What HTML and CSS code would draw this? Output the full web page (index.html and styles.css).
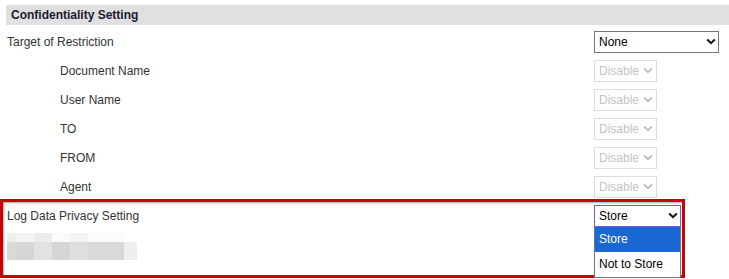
FILE: index.html
```html
<!DOCTYPE html>
<html lang="en">
<head>
    <meta charset="UTF-8">
    <title>Confidentiality Setting</title>
    <link rel="stylesheet" href="styles.css">
</head>
<body>

    <!-- Confidentiality section -->
    <div class="section">
        <div class="section-title">Confidentiality Setting</div>

        <div class="row">
            <div class="label">Target of Restriction</div>
            <div class="select-box wide">
                <select class="sel"><option>None</option></select>
                <svg class="chev" viewBox="0 0 10 7"><path d="M1.2 1.5L5 5.2 8.8 1.5"/></svg>
            </div>
        </div>

        <div class="row">
            <div class="label sub">Document Name</div>
            <div class="select-box small disabled">
                <select class="sel" disabled><option>Disable</option></select>
                <svg class="chev" viewBox="0 0 10 7"><path d="M1.2 1.5L5 5.2 8.8 1.5"/></svg>
            </div>
        </div>
        <div class="row">
            <div class="label sub">User Name</div>
            <div class="select-box small disabled">
                <select class="sel" disabled><option>Disable</option></select>
                <svg class="chev" viewBox="0 0 10 7"><path d="M1.2 1.5L5 5.2 8.8 1.5"/></svg>
            </div>
        </div>
        <div class="row">
            <div class="label sub">TO</div>
            <div class="select-box small disabled">
                <select class="sel" disabled><option>Disable</option></select>
                <svg class="chev" viewBox="0 0 10 7"><path d="M1.2 1.5L5 5.2 8.8 1.5"/></svg>
            </div>
        </div>
        <div class="row">
            <div class="label sub">FROM</div>
            <div class="select-box small disabled">
                <select class="sel" disabled><option>Disable</option></select>
                <svg class="chev" viewBox="0 0 10 7"><path d="M1.2 1.5L5 5.2 8.8 1.5"/></svg>
            </div>
        </div>
        <div class="row">
            <div class="label sub">Agent</div>
            <div class="select-box small disabled">
                <select class="sel" disabled><option>Disable</option></select>
                <svg class="chev" viewBox="0 0 10 7"><path d="M1.2 1.5L5 5.2 8.8 1.5"/></svg>
            </div>
        </div>

        <div class="row">
            <div class="label">Log Data Privacy Setting</div>
            <div class="select-box mid focused">
                <select class="sel">
                    <option>Store</option>
                    <option>Not to Store</option>
                </select>
                <svg class="chev" viewBox="0 0 10 7"><path d="M1.2 1.5L5 5.2 8.8 1.5"/></svg>
                <!-- opened option list -->
                <ul class="option-list">
                    <li class="active">Store</li>
                    <li>Not to Store</li>
                </ul>
            </div>
        </div>

        <!-- blurred / masked text -->
        <div class="masked">
            <div class="mask-line top">
                <span style="width:9px;background:#eef0ef"></span>
                <span style="width:18px;background:#f4f4f4"></span>
                <span style="width:18px;background:#ececec"></span>
                <span style="width:18px;background:#fafafa"></span>
                <span style="width:18px;background:#f3f3f3"></span>
                <span style="width:36px;background:#fafafa"></span>
            </div>
            <div class="mask-line bottom">
                <span style="width:9px;background:#d8dada"></span>
                <span style="width:18px;background:#d6d6d6"></span>
                <span style="width:18px;background:#e2e2e2"></span>
                <span style="width:18px;background:#d6d6d6"></span>
                <span style="width:18px;background:#dedede"></span>
                <span style="width:36px;background:#d9d9d9"></span>
                <span style="width:13px;background:#eef0ef"></span>
            </div>
        </div>
    </div>

    <!-- highlight frame -->
    <div class="highlight"></div>

</body>
</html>
```

FILE: styles.css
```css
/* Reset */
* {
    margin: 0;
    padding: 0;
    box-sizing: border-box;
}

html, body {
    height: 279px;
}

body {
    font-family: "Liberation Sans", Arial, sans-serif;
    font-size: 12px;
    color: #333;
    background: #fff;
    position: relative;
}

/* Section */
.section {
    padding: 5px 0 0 6px;
}

.section-title {
    height: 20px;
    line-height: 20px;
    background: #e0e0e0;
    padding-left: 5px;
    font-weight: bold;
    color: #1b1b30;
    margin-bottom: 2px;
}

.row {
    display: flex;
    align-items: center;
    height: 29px;
}

.label {
    width: 588px;
    padding-left: 1px;
}

.label.sub {
    padding-left: 54px;
}

/* Selects */
.select-box {
    position: relative;
    height: 22px;
}

.select-box.wide { width: 125px; }
.select-box.small { width: 63px; }
.select-box.mid { width: 87px; }

.sel {
    appearance: none;
    -webkit-appearance: none;
    display: block;
    width: 100%;
    height: 22px;
    font-family: "Liberation Sans", Arial, sans-serif;
    font-size: 12px;
    color: #000;
    background: #fff;
    border: 1px solid #767676;
    border-radius: 0;
    padding: 0 0 0 4px;
    outline: none;
}

.chev {
    position: absolute;
    right: 3px;
    top: 7px;
    width: 10px;
    height: 7px;
    pointer-events: none;
}

.chev path {
    fill: none;
    stroke: #111;
    stroke-width: 2;
}

.disabled .sel {
    color: #aaa;
    border-color: #cfcfcf;
}

.disabled .chev {
    right: 4px;
}

.disabled .chev path {
    stroke: #b0b0b0;
    stroke-width: 1.6;
}

.focused .sel {
    border-color: #7d55ea;
}

/* Opened dropdown */
.option-list {
    position: absolute;
    top: 22px;
    left: 0;
    width: 87px;
    list-style: none;
    background: #fff;
    border: 1px solid #767676;
    border-top: none;
    z-index: 5;
}

.option-list li {
    height: 25px;
    line-height: 25px;
    padding-left: 4px;
    color: #000;
}

.option-list li.active {
    background: #1967d2;
    color: #fff;
}

/* Masked text */
.masked {
    margin-top: 3px;
    padding-left: 1px;
}

.mask-line {
    display: flex;
}

.mask-line span {
    display: block;
}

.mask-line.top span {
    height: 9px;
}

.mask-line.bottom span {
    height: 18px;
}

/* Red annotation frame */
.highlight {
    position: absolute;
    left: 0;
    top: 199px;
    width: 685px;
    height: 79px;
    border: 3px solid #cc0000;
    box-shadow: inset 1px 1px 2px rgba(0, 0, 0, 0.35);
    z-index: 3;
    pointer-events: none;
}
```
